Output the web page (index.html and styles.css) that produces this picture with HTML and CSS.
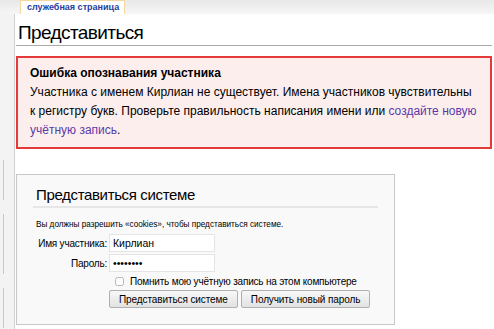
FILE: index.html
```html
<!DOCTYPE html>
<html lang="ru">
<head>
  <meta charset="UTF-8">
  <title>Представиться</title>
  <link rel="stylesheet" href="styles.css">
</head>
<body>
  <div class="side">
    <div class="portlet p1"></div>
    <div class="portlet p2"></div>
    <div class="portlet p3"></div>
  </div>
  <div class="tabs">
    <span class="tab">служебная страница</span>
  </div>
  <div class="content">
    <h1>Представиться</h1>

    <div class="errorbox">
      <strong>Ошибка опознавания участника</strong>
      <p>Участника с именем Кирлиан не существует. Имена участников чувствительны к регистру букв. Проверьте правильность написания имени или <a href="#">создайте новую учётную запись</a>.</p>
    </div>

    <div class="loginbox">
      <h2>Представиться системе</h2>
      <p class="note">Вы должны разрешить «cookies», чтобы представиться системе.</p>
      <div class="row">
        <label>Имя участника:</label>
        <input type="text" value="Кирлиан">
      </div>
      <div class="row">
        <label>Пароль:</label>
        <input type="password" value="12345678">
      </div>
      <div class="row">
        <label></label>
        <span class="remember"><input type="checkbox"> Помнить мою учётную запись на этом компьютере</span>
      </div>
      <div class="row">
        <label></label>
        <span class="buttons">
          <button>Представиться системе</button>
          <button>Получить новый пароль</button>
        </span>
      </div>
    </div>
  </div>
</body>
</html>
```

FILE: styles.css
```css
body {
  margin: 0;
  font-family: 'Liberation Sans', Arial, sans-serif;
  background: #f3f3f3;
  color: #000;
  height: 329px;
  overflow: hidden;
  position: relative;
}
.side {
  position: absolute;
  left: 0;
  top: 60px;
  width: 4px;
}
.portlet {
  border-right: 1px solid #c8c8c8;
  margin-bottom: 14px;
}
.p1 { height: 40px; margin-top: 100px; }
.p2 { height: 60px; }
.p3 { height: 40px; }
.tabs {
  height: 14px;
  padding-left: 20px;
  background: linear-gradient(to bottom, #e8e8e8, #f6f6f6);
}
.tab {
  display: inline-block;
  height: 14px;
  padding: 0 5px 0 6px;
  background: #fff;
  border: 1px solid #f3d9a0;
  border-bottom: none;
  box-sizing: border-box;
  font-size: 9px;
  font-weight: bold;
  line-height: 12px;
  color: #1f3ea0;
  vertical-align: top;
}
.content {
  margin-left: 14px;
  background: #fff;
  border-left: 1px solid #d0d0d0;
  padding: 5px 2px 0 1px;
  height: 310px;
}
h1 {
  margin: 0;
  font-weight: normal;
  font-size: 19px;
  letter-spacing: -0.6px;
  line-height: 24px;
  padding: 2px 0 0 2px;
  border-bottom: 1px solid #aaa;
}
.errorbox {
  margin-top: 10px;
  border: 2px solid #e53a3a;
  background: #fdeeee;
  padding: 5px 12px 7px 12px;
  font-size: 12px;
}
.errorbox strong {
  display: block;
  line-height: 20px;
}
.errorbox p {
  margin: 0;
  line-height: 19px;
}
.errorbox a {
  color: #5a3aa8;
  text-decoration: none;
}
.loginbox {
  margin-top: 25px;
  width: 358px;
  border: 1px solid #c8c8c8;
  background: #f9f9f9;
  padding: 10px 0 14px 19px;
}
.loginbox h2 {
  margin: 0 0 0 -3px;
  width: 342px;
  padding: 0 0 1px 3px;
  font-weight: normal;
  font-size: 15px;
  letter-spacing: -0.35px;
  line-height: 20px;
  border-bottom: 2px solid #e6e6e6;
}
.note {
  margin: 11px 0 3px;
  font-size: 8.2px;
  line-height: 12px;
}
.row {
  display: flex;
  align-items: center;
  font-size: 10px;
  letter-spacing: -0.2px;
  margin-bottom: 2px;
  white-space: nowrap;
}
.row label {
  width: 71px;
  flex: none;
  text-align: right;
  padding-right: 2px;
}
.row input[type=text],
.row input[type=password] {
  width: 106px;
  height: 18px;
  box-sizing: border-box;
  border: 1px solid #e4e4e4;
  background: #fff;
  font-family: 'Liberation Sans', Arial, sans-serif;
  font-size: 10.5px;
  padding: 0 3px;
  margin: 0;
}
.remember {
  display: flex;
  align-items: center;
  padding-left: 6px;
  height: 14px;
}
.remember input {
  width: 9px;
  height: 9px;
  margin: 0 6px 0 0;
  opacity: 0.5;
}
.buttons {
  display: flex;
  gap: 3px;
}
.buttons button {
  font-family: 'Liberation Sans', Arial, sans-serif;
  font-size: 10px;
  letter-spacing: -0.1px;
  height: 18px;
  padding: 0 9px;
  border: 1px solid #b0b0b0;
  background: linear-gradient(to bottom, #f8f8f8, #e2e2e2);
  border-radius: 2px;
  color: #000;
  margin: 0;
}
```
